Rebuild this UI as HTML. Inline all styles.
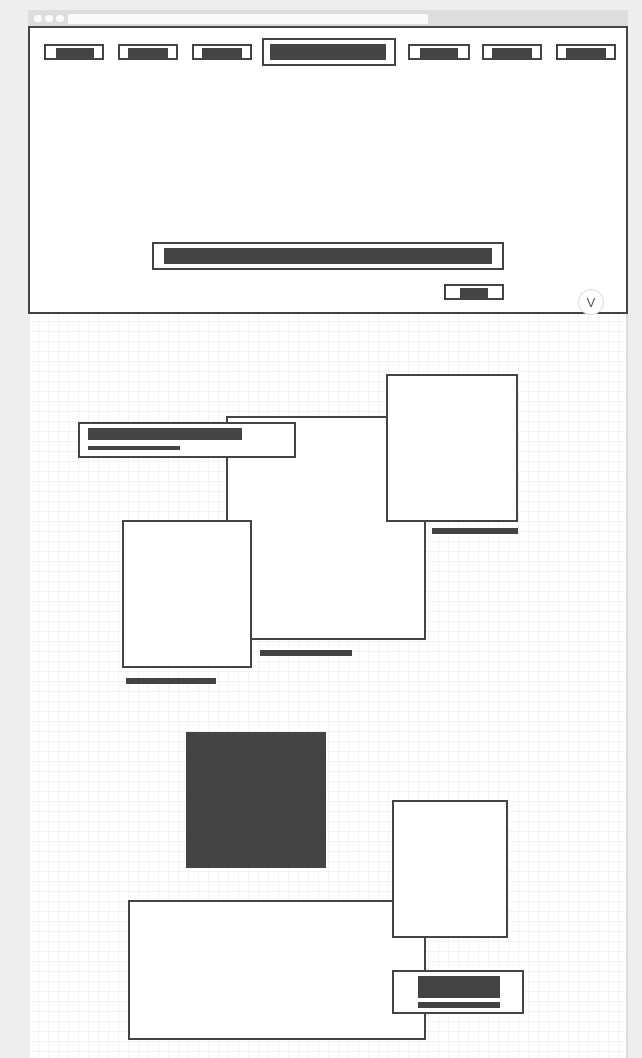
<!DOCTYPE html>
<html><head><style>
*{margin:0;padding:0;box-sizing:border-box}
body{width:642px;height:1058px;background:#eee;position:relative;overflow:hidden;font-family:"Liberation Sans",sans-serif}
div{position:absolute}
.b{border:2px solid #444;background:#fff}
.d{background:#444}
</style></head><body>
<div style="left:28px;top:10px;width:600px;height:17px;background:#ddd"></div>
<div style="left:34px;top:15px;width:8px;height:7px;border-radius:3px;background:#fafafa"></div>
<div style="left:45px;top:15px;width:8px;height:7px;border-radius:3px;background:#fafafa"></div>
<div style="left:56px;top:15px;width:8px;height:7px;border-radius:3px;background:#fafafa"></div>
<div style="left:68px;top:14px;width:360px;height:10px;border-radius:2px;background:#fafafa"></div>
<div style="left:30px;top:314px;width:596px;height:744px;background-color:#fff;background-image:linear-gradient(#f3f3f3 1px,transparent 1px),linear-gradient(90deg,#f3f3f3 1px,transparent 1px);background-size:10px 10px;background-position:8px 7px"></div>
<div style="left:626px;top:314px;width:2px;height:744px;background:#ddd"></div>
<div class="b" style="left:28px;top:26px;width:600px;height:288px"></div>

<div class="b" style="left:44px;top:44px;width:60px;height:16px"></div><div class="d" style="left:56px;top:48px;width:38px;height:12px"></div>
<div class="b" style="left:118px;top:44px;width:60px;height:16px"></div><div class="d" style="left:128px;top:48px;width:40px;height:12px"></div>
<div class="b" style="left:192px;top:44px;width:60px;height:16px"></div><div class="d" style="left:202px;top:48px;width:40px;height:12px"></div>
<div class="b" style="left:262px;top:38px;width:134px;height:28px"></div><div class="d" style="left:270px;top:44px;width:116px;height:16px"></div>
<div class="b" style="left:408px;top:44px;width:62px;height:16px"></div><div class="d" style="left:420px;top:48px;width:38px;height:12px"></div>
<div class="b" style="left:482px;top:44px;width:60px;height:16px"></div><div class="d" style="left:492px;top:48px;width:40px;height:12px"></div>
<div class="b" style="left:556px;top:44px;width:60px;height:16px"></div><div class="d" style="left:566px;top:48px;width:40px;height:12px"></div>

<div class="b" style="left:152px;top:242px;width:352px;height:28px"></div><div class="d" style="left:164px;top:248px;width:328px;height:16px"></div>
<div class="b" style="left:444px;top:284px;width:60px;height:16px"></div><div class="d" style="left:460px;top:288px;width:28px;height:12px"></div>
<div style="left:578px;top:289px;width:26px;height:26px;border-radius:50%;border:1px solid #ddd;background:#fff;font-size:13px;color:#555;text-align:center;line-height:26px">V</div>

<div class="b" style="left:226px;top:416px;width:200px;height:224px"></div>
<div class="b" style="left:386px;top:374px;width:132px;height:148px"></div>
<div class="b" style="left:78px;top:422px;width:218px;height:36px"></div>
<div class="d" style="left:88px;top:428px;width:154px;height:12px"></div>
<div class="d" style="left:88px;top:446px;width:92px;height:4px"></div>
<div class="b" style="left:122px;top:520px;width:130px;height:148px"></div>
<div class="d" style="left:432px;top:528px;width:86px;height:6px"></div>
<div class="d" style="left:260px;top:650px;width:92px;height:6px"></div>
<div class="d" style="left:126px;top:678px;width:90px;height:6px"></div>

<div class="d" style="left:186px;top:732px;width:140px;height:136px"></div>
<div class="b" style="left:128px;top:900px;width:298px;height:140px"></div>
<div class="b" style="left:392px;top:800px;width:116px;height:138px"></div>
<div class="b" style="left:392px;top:970px;width:132px;height:44px"></div>
<div class="d" style="left:418px;top:976px;width:82px;height:22px"></div>
<div class="d" style="left:418px;top:1002px;width:82px;height:6px"></div>
</body></html>
